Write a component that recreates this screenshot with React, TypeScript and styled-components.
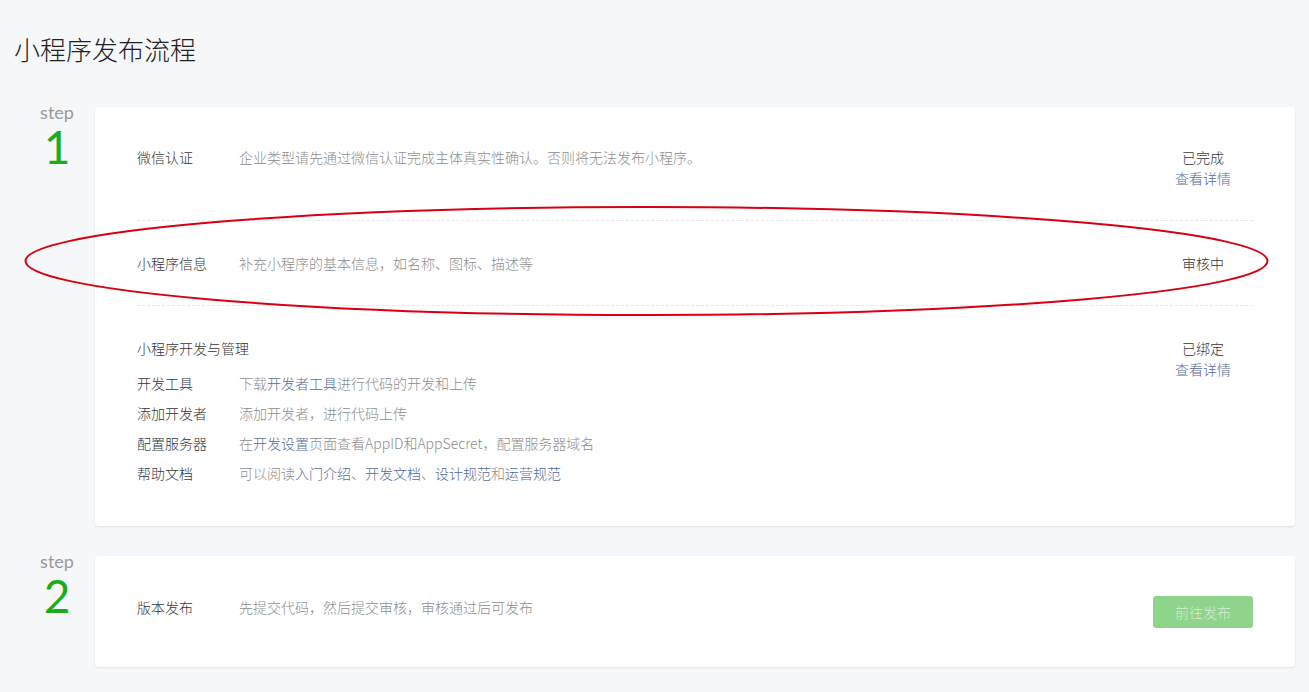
import React from "react";
import styled, { createGlobalStyle } from "styled-components";

/* ===============================
   Global
================================ */

const GlobalStyle = createGlobalStyle`
  html, body {
    margin: 0;
    padding: 0;
    background: #f6f7f9;
  }

  body {
    font-family: "Noto Sans CJK SC", "Noto Sans", sans-serif;
    font-size: 14px;
    font-weight: 300;
    color: #353535;
  }
`;

/* ===============================
   Page
================================ */

const Page = styled.div`
  position: relative;
  padding: 31px 14px 26px 14px;
  min-height: 692px;
  box-sizing: border-box;
`;

const Title = styled.h1`
  margin: 0 0 40px 0;
  font-size: 26px;
  font-weight: 300;
  line-height: 36px;
  color: #222;
`;

const Steps = styled.div`
  display: flex;
  flex-direction: column;
  gap: 30px;
`;

const StepRow = styled.div`
  display: flex;
  align-items: flex-start;
`;

const StepMark = styled.div`
  width: 81px;
  flex-shrink: 0;
  margin-top: -4px;
  padding-left: 5px;
  box-sizing: border-box;
  text-align: center;
  font-family: Lato, "Open Sans", sans-serif;
  font-weight: 400;
`;

const StepWord = styled.div`
  font-size: 18px;
  line-height: 18px;
  color: #9a9a9a;
`;

const StepNumber = styled.div`
  font-size: 46px;
  line-height: 30px;
  color: #1aad19;
  margin-top: 11px;
`;

/* ===============================
   Card
================================ */

const Card = styled.div<{ $pad: string }>`
  flex: 1;
  background: #fff;
  border-radius: 4px;
  box-shadow: 0 1px 2px rgba(0, 0, 0, 0.09);
  padding: ${(p) => p.$pad};
`;

const Section = styled.div<{ $last?: boolean }>`
  display: flex;
  align-items: flex-start;
  padding: 31px 0 31px 0;
  border-bottom: ${(p) => (p.$last ? "none" : "1px dashed #e7e7eb")};
`;

const Main = styled.div`
  flex: 1;
`;

const Line = styled.div`
  display: flex;
  line-height: 22px;
`;

const Label = styled.span`
  width: 102px;
  flex-shrink: 0;
  color: #353535;
`;

const Desc = styled.span`
  color: #8d8d8d;
`;

const Link = styled.a`
  color: #576b95;
  text-decoration: none;
  cursor: pointer;
`;

const SubTitle = styled.div`
  line-height: 22px;
  color: #353535;
  margin-bottom: 13px;
`;

const SubList = styled.div`
  display: flex;
  flex-direction: column;
  gap: 8px;
`;

const Status = styled.div`
  width: 100px;
  flex-shrink: 0;
  text-align: center;
  line-height: 22px;
  color: #353535;
`;

const StatusLink = styled(Link)`
  display: block;
  margin-top: -1px;
`;

const Button = styled.button`
  width: 100px;
  height: 32px;
  flex-shrink: 0;
  border: none;
  border-radius: 3px;
  background: #8fd48b;
  color: rgba(255, 255, 255, 0.62);
  font-family: "Noto Sans CJK SC", sans-serif;
  font-size: 14px;
  font-weight: 300;
  cursor: not-allowed;
`;

const PublishRow = styled.div`
  display: flex;
  align-items: flex-start;
`;

const PublishText = styled(Main)`
  padding-top: 0;
`;

/* ===============================
   Annotation overlay
================================ */

const Overlay = styled.svg`
  position: absolute;
  left: 0;
  top: 0;
  width: 1309px;
  height: 692px;
  pointer-events: none;
`;

/* ===============================
   Component
================================ */

export default function App() {
  return (
    <>
      <GlobalStyle />
      <Page>
        <Title>小程序发布流程</Title>

        <Steps>
          {/* step 1 */}
          <StepRow>
            <StepMark>
              <StepWord>step</StepWord>
              <StepNumber>1</StepNumber>
            </StepMark>
            <Card $pad="8px 42px 11px 42px">
              <Section>
                <Main>
                  <Line>
                    <Label>微信认证</Label>
                    <Desc>企业类型请先通过微信认证完成主体真实性确认。否则将无法发布小程序。</Desc>
                  </Line>
                </Main>
                <Status>
                  已完成
                  <StatusLink>查看详情</StatusLink>
                </Status>
              </Section>

              <Section>
                <Main>
                  <Line>
                    <Label>小程序信息</Label>
                    <Desc>补充小程序的基本信息，如名称、图标、描述等</Desc>
                  </Line>
                </Main>
                <Status>审核中</Status>
              </Section>

              <Section $last>
                <Main>
                  <SubTitle>小程序开发与管理</SubTitle>
                  <SubList>
                    <Line>
                      <Label>开发工具</Label>
                      <Desc>
                        下载<Link>开发者工具</Link>进行代码的开发和上传
                      </Desc>
                    </Line>
                    <Line>
                      <Label>添加开发者</Label>
                      <Desc>添加开发者，进行代码上传</Desc>
                    </Line>
                    <Line>
                      <Label>配置服务器</Label>
                      <Desc>
                        在<Link>开发设置</Link>页面查看AppID和AppSecret，配置服务器域名
                      </Desc>
                    </Line>
                    <Line>
                      <Label>帮助文档</Label>
                      <Desc>
                        可以阅读<Link>入门介绍</Link>、<Link>开发文档</Link>、
                        <Link>设计规范</Link>和<Link>运营规范</Link>
                      </Desc>
                    </Line>
                  </SubList>
                </Main>
                <Status>
                  已绑定
                  <StatusLink>查看详情</StatusLink>
                </Status>
              </Section>
            </Card>
          </StepRow>

          {/* step 2 */}
          <StepRow>
            <StepMark>
              <StepWord>step</StepWord>
              <StepNumber>2</StepNumber>
            </StepMark>
            <Card $pad="40px 42px 39px 42px">
              <PublishRow>
                <PublishText>
                  <Line>
                    <Label>版本发布</Label>
                    <Desc>先提交代码，然后提交审核，审核通过后可发布</Desc>
                  </Line>
                </PublishText>
                <Button>前往发布</Button>
              </PublishRow>
            </Card>
          </StepRow>
        </Steps>

        {/* red hand-drawn highlight */}
        <Overlay viewBox="0 0 1309 692">
          <ellipse
            cx="646.5"
            cy="261"
            rx="621"
            ry="54"
            fill="none"
            stroke="#d7000f"
            strokeWidth="2"
          />
        </Overlay>
      </Page>
    </>
  );
}
